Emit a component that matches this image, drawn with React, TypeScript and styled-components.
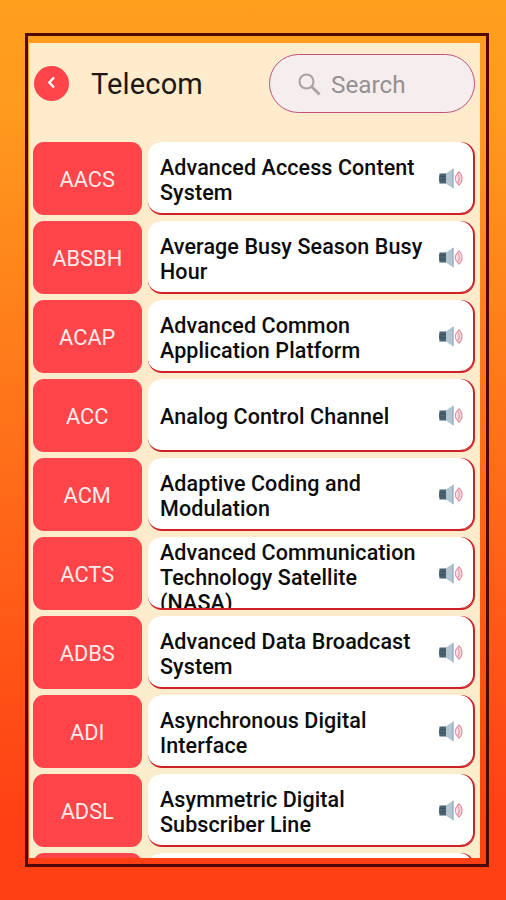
import React from "react";
import styled, { createGlobalStyle } from "styled-components";

const GlobalStyle = createGlobalStyle`
  *, *::before, *::after { box-sizing: border-box; }
  body { margin: 0; font-family: Roboto, "Liberation Sans", sans-serif; }
`;

const Backdrop = styled.div`
  width: 506px;
  height: 900px;
  padding: 33px 17px 33px 25px;
  background: linear-gradient(180deg, #ff9f1e 0%, #ff9a1e 12%, #ff3f14 92%, #ff3f14 100%);
`;

const Frame = styled.div`
  width: 464px;
  height: 834px;
  border: 3px solid #4f0808;
  padding: 7px 6px 6px 1px;
`;

const Screen = styled.main`
  height: 815px;
  overflow: hidden;
  background: linear-gradient(180deg, #feeccd 0%, #fdebcc 60%, #f9edcc 100%);
`;

const Header = styled.header`
  display: flex;
  align-items: center;
  height: 80px;
  padding: 0 5px;
`;

const BackButton = styled.button`
  display: flex;
  align-items: center;
  justify-content: center;
  width: 35px;
  height: 35px;
  padding: 0;
  border: 0;
  border-radius: 50%;
  background: #ff444a;
`;

const Title = styled.h1`
  flex: 1;
  margin: 2px 0 0 22px;
  font-size: 29px;
  line-height: 34px;
  font-weight: 400;
  letter-spacing: 0.15px;
  color: #1c1813;
`;

const SearchBox = styled.div`
  display: flex;
  align-items: center;
  gap: 10px;
  width: 206px;
  height: 59px;
  padding: 3px 0 0 28px;
  border: 1.5px solid #bf527b;
  border-radius: 30px;
  background: #f6eeee;
  font-size: 24.3px;
  color: #969090;
`;

const List = styled.ul`
  display: flex;
  flex-direction: column;
  gap: 6px;
  margin: 19px 0 0;
  padding: 0 5px 0 4px;
  list-style: none;
`;

const Row = styled.li`
  display: flex;
  flex: none;
  justify-content: space-between;
  height: 73px;
`;

const Code = styled.div`
  display: flex;
  align-items: center;
  justify-content: center;
  width: 108.5px;
  border-radius: 11px;
  padding-top: 1px;
  background: #ff4549;
  color: #ffeaea;
  font-size: 21.8px;
`;

const Card = styled.div`
  display: flex;
  align-items: center;
  justify-content: space-between;
  width: 327px;
  padding: 1px 11px 0 12px;
  border-bottom: 2px solid #cf2226;
  overflow: hidden;
  border-radius: 14px;
  background: #fff;
  box-shadow: inset -2px 0 0 #cf2226;
`;

const Meaning = styled.div<{ $tall?: boolean }>`
  align-self: ${(p) => (p.$tall ? "flex-start" : "center")};
  margin-top: ${(p) => (p.$tall ? "2px" : "3px")};
  font-size: 21.5px;
  line-height: 25px;
  font-weight: 500;
  letter-spacing: 0.1px;
  white-space: pre;
  color: #0c0c0c;
`;

const SpeakerIcon = styled.svg`
  flex: none;
  margin-top: 1px;
`;

const Speaker = () => (
  <SpeakerIcon width="26" height="21" viewBox="0 0 26 21" aria-hidden="true">
    <path d="M7 6 L15.5 0.5 V20.5 L7 15Z" fill="#b4c5d2" />
    <path d="M14.3 1.3 L15.5 0.5 V20.5 L14.3 19.7Z" fill="#98acba" />
    <path d="M1.5 5.5 H8 V15.5 H1.5 Q0.5 10.5 1.5 5.5Z" fill="#4b6270" />
    <path d="M1.5 8.5H7.5M1.5 12H7.5" stroke="#3c5361" strokeWidth="1" />
    <path
      d="M21 3.8 C25 7.5 25 13.5 21 17.2 L17.8 13 Q16.7 10.5 17.8 8Z M20.2 6.5 Q22.4 10.5 20.2 14.5"
      fill="#fbe4e8"
      stroke="#e28c9c"
      strokeWidth="1.1"
    />
  </SpeakerIcon>
);

const entries = [
  { code: "AACS", meaning: "Advanced Access Content\nSystem" },
  { code: "ABSBH", meaning: "Average Busy Season Busy\nHour" },
  { code: "ACAP", meaning: "Advanced Common\nApplication Platform" },
  { code: "ACC", meaning: "Analog Control Channel" },
  { code: "ACM", meaning: "Adaptive Coding and\nModulation" },
  { code: "ACTS", meaning: "Advanced Communication\nTechnology Satellite\n(NASA)", tall: true },
  { code: "ADBS", meaning: "Advanced Data Broadcast\nSystem" },
  { code: "ADI", meaning: "Asynchronous Digital\nInterface" },
  { code: "ADSL", meaning: "Asymmetric Digital\nSubscriber Line" },
  { code: "", meaning: "" },
];

export default function App() {
  return (
    <Backdrop>
      <GlobalStyle />
      <Frame>
        <Screen>
          <Header>
            <BackButton aria-label="Back">
              <svg width="12" height="14" viewBox="0 0 12 14">
                <path d="M8 1.5 L3.3 6.5 L8 11.5" fill="none" stroke="#fff" strokeWidth="2.4" />
              </svg>
            </BackButton>
            <Title>Telecom</Title>
            <SearchBox>
              <svg width="23" height="23" viewBox="0 0 23 23">
                <circle cx="8.5" cy="8.5" r="7" fill="none" stroke="#aaa3a2" strokeWidth="2.1" />
                <path d="M13.5 13.5 L21.5 21.5" stroke="#aaa3a2" strokeWidth="2.8" />
              </svg>
              <span>Search</span>
            </SearchBox>
          </Header>
          <List>
            {entries.map((e, i) => (
              <Row key={i}>
                <Code>{e.code}</Code>
                <Card>
                  <Meaning $tall={e.tall}>{e.meaning}</Meaning>
                  {e.code && <Speaker />}
                </Card>
              </Row>
            ))}
          </List>
        </Screen>
      </Frame>
    </Backdrop>
  );
}
